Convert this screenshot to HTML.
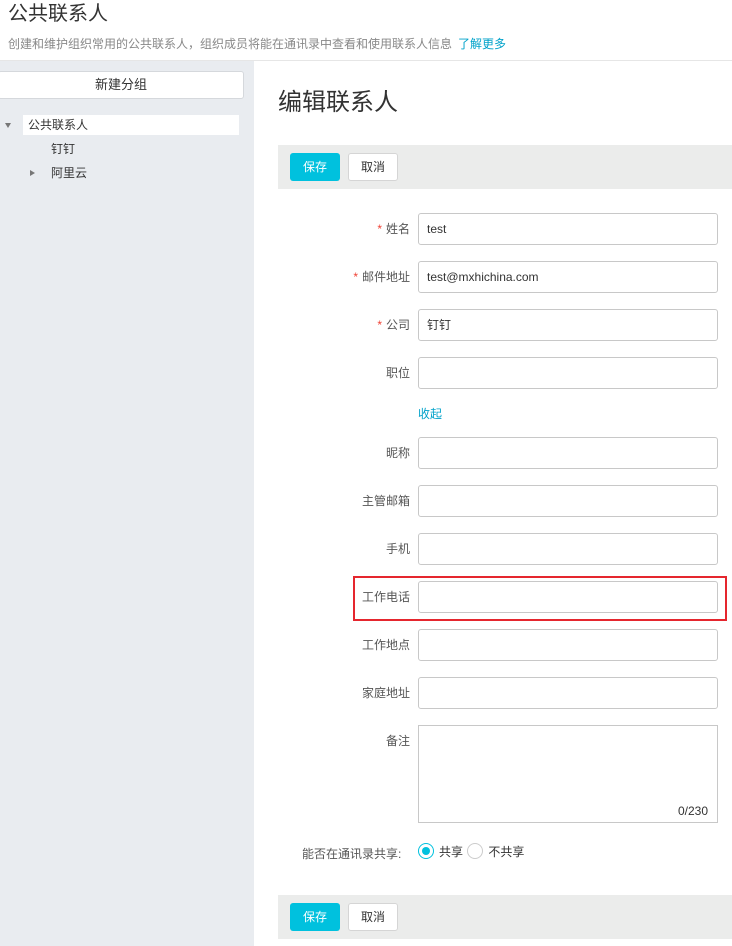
<!DOCTYPE html>
<html><head><meta charset="utf-8"><style>
*{box-sizing:border-box;margin:0;padding:0}
body{width:732px;height:946px;overflow:hidden;background:#fff;font-family:"Liberation Sans","Noto Sans CJK SC",sans-serif;color:#333;position:relative}
.a{position:absolute}
.title{left:8px;top:1px;font-size:20px;color:#333;line-height:26px}
.sub{left:8px;top:36px;font-size:12px;color:#888;line-height:16px}
.sub a{color:#00a2ca;margin-left:6px}
.line{left:0;top:60px;width:732px;height:1px;background:#e6e6e6}
.side{left:0;top:61px;width:254px;height:885px;background:#e9ecf0}
.nb{left:-2px;top:71px;width:246px;height:28px;background:#fff;border:1px solid #d5d8dc;border-radius:3px;text-align:center;font-size:13px;line-height:26px}
.sel{left:23px;top:115px;width:216px;height:20px;background:#fff}
.tree{font-size:12px;line-height:20px}
.h1{left:278px;top:86px;font-size:24px;color:#333;line-height:34px}
.bar{left:278px;width:454px;height:44px;background:#ebeceb}
.btn{position:absolute;top:8px;width:50px;height:28px;border-radius:3px;font-size:12px;line-height:28px;text-align:center}
.save{left:12px;background:#00c1de;color:#fff}
.cancel{left:70px;background:#fff;border:1px solid #d5d5d5;line-height:26px;color:#333}
.lab{position:absolute;right:322px;font-size:12px;color:#555;line-height:32px;text-align:right;white-space:nowrap}
.lab i{color:#f04134;font-style:normal;margin-right:4px}
.in{position:absolute;left:418px;width:300px;height:32px;border:1px solid #c8c8c8;border-radius:3px;font-size:12px;line-height:30px;padding-left:8px;color:#333}
.radio{display:inline-block;width:16px;height:16px;border:1px solid #ccc;border-radius:50%;vertical-align:-3px;margin-right:5px;position:relative}
.radio.on{border-color:#00c1de}
.radio.on:after{content:"";position:absolute;left:3px;top:3px;width:8px;height:8px;border-radius:50%;background:#00c1de}
</style></head><body>
<div class="a title">公共联系人</div>
<div class="a sub">创建和维护组织常用的公共联系人，组织成员将能在通讯录中查看和使用联系人信息<a>了解更多</a></div>
<div class="a line"></div>
<div class="a side"></div>
<div class="a nb">新建分组</div>
<div class="a sel"></div>
<div class="a" style="left:5px;top:123px;width:0;height:0;border-left:3.5px solid transparent;border-right:3.5px solid transparent;border-top:5px solid #777"></div>
<div class="a tree" style="left:28px;top:115px">公共联系人</div>
<div class="a tree" style="left:51px;top:139px">钉钉</div>
<div class="a" style="left:30px;top:170px;width:0;height:0;border-top:3.5px solid transparent;border-bottom:3.5px solid transparent;border-left:5px solid #777"></div>
<div class="a tree" style="left:51px;top:163px">阿里云</div>

<div class="a h1">编辑联系人</div>
<div class="a bar" style="top:145px"><div class="btn save">保存</div><div class="btn cancel">取消</div></div>

<div class="lab" style="top:213px"><i>*</i>姓名</div><div class="in" style="top:213px">test</div>
<div class="lab" style="top:261px"><i>*</i>邮件地址</div><div class="in" style="top:261px">test@mxhichina.com</div>
<div class="lab" style="top:309px"><i>*</i>公司</div><div class="in" style="top:309px">钉钉</div>
<div class="lab" style="top:357px">职位</div><div class="in" style="top:357px"></div>
<div class="a" style="left:418px;top:406px;font-size:12px;color:#00a2ca;line-height:16px">收起</div>
<div class="lab" style="top:437px">昵称</div><div class="in" style="top:437px"></div>
<div class="lab" style="top:485px">主管邮箱</div><div class="in" style="top:485px"></div>
<div class="lab" style="top:533px">手机</div><div class="in" style="top:533px"></div>
<div class="a" style="left:353px;top:576px;width:374px;height:45px;border:2px solid #e5262e"></div>
<div class="lab" style="top:581px">工作电话</div><div class="in" style="top:581px"></div>
<div class="lab" style="top:629px">工作地点</div><div class="in" style="top:629px"></div>
<div class="lab" style="top:677px">家庭地址</div><div class="in" style="top:677px"></div>
<div class="lab" style="top:725px">备注</div><div class="in" style="top:725px;height:98px;border-radius:0"></div>
<div class="a" style="left:678px;top:804px;font-size:12px;color:#333;line-height:14px">0/230</div>
<div class="a" style="left:302px;top:845px;font-size:12px;color:#555;line-height:18px">能否在通讯录共享:</div>
<div class="a" style="left:418px;top:843px;font-size:12px;line-height:18px;color:#333"><span class="radio on"></span>共享 <span class="radio" style="margin-left:1px"></span>不共享</div>
<div class="a bar" style="top:895px"><div class="btn save">保存</div><div class="btn cancel">取消</div></div>
</body></html>
